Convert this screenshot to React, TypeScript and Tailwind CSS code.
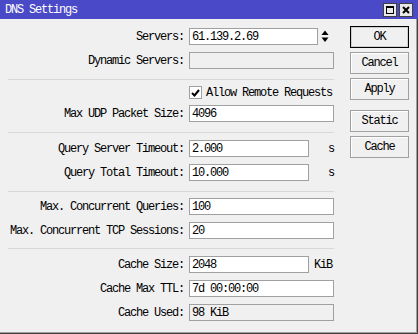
import React from "react";

const mono = "font-['Liberation_Mono','DejaVu_Sans_Mono',monospace] text-[12px] tracking-[-1.2px] leading-none";

function Field({
  label,
  children,
  className = "",
}: {
  label: string;
  children: React.ReactNode;
  className?: string;
}) {
  return (
    <div className={`flex items-center h-[17px] ${className}`}>
      <span className="w-[184px] shrink-0 text-right text-black">{label}</span>
      <div className="ml-[5px] flex items-center">{children}</div>
    </div>
  );
}

function Input({
  value = "",
  width,
  disabled = false,
}: {
  value?: string;
  width: string;
  disabled?: boolean;
}) {
  return (
    <div
      className={`h-[17px] border border-[#a0a0a0] pl-[2px] flex items-center text-black ${width} ${
        disabled ? "bg-[#f0f0f0]" : "bg-white"
      }`}
    >
      {value}
    </div>
  );
}

function Separator({ className = "" }: { className?: string }) {
  return <div className={`ml-[8px] w-[326px] h-px bg-[#d8d8d8] ${className}`} />;
}

function Btn({ label, primary = false, className = "" }: { label: string; primary?: boolean; className?: string }) {
  return (
    <div
      className={`h-[22px] w-[59px] flex items-center justify-center text-black bg-[#f0f0f0] ${
        primary ? "border border-black shadow-[inset_0_0_0_1px_#d0d0d0]" : "border border-[#a0a0a0] shadow-[inset_1px_1px_0_#ffffff]"
      } ${className}`}
    >
      {label}
    </div>
  );
}

export default function App() {
  return (
    <div className={`w-[418px] h-[334px] flex flex-col bg-[#f0f0f0] ${mono}`}>
      {/* title bar */}
      <div className="h-[19px] shrink-0 bg-[#4a4ac8] flex items-center pl-[5px] pr-[5px]">
        <span className="text-white flex-1 pt-px">DNS Settings</span>
        <div className="flex gap-[2px]">
          <div className="size-[14px] bg-[#e8e8e8] border border-[#404040] flex items-center justify-center">
            <div className="size-[8px] border border-black border-t-2" />
          </div>
          <div className="size-[14px] bg-[#e8e8e8] border border-[#404040] flex items-center justify-center">
            <svg width="8" height="8" viewBox="0 0 8 8">
              <path d="M1 1L7 7M7 1L1 7" stroke="#000" strokeWidth="2" />
            </svg>
          </div>
        </div>
      </div>

      {/* body */}
      <div className="flex-1 flex border-r border-b border-[#404040]">
        <div className="flex-1 flex border-r border-b border-[#a0a0a0]">
          <div className="w-[342px] flex flex-col pt-[9px]">
            <Field label="Servers:">
              <Input value="61.139.2.69" width="w-[129px]" />
              <svg className="ml-[3px]" width="8" height="13" viewBox="0 0 8 13">
                <path d="M0.5 5L4 0.5L7.5 5Z" fill="#000" />
                <path d="M0.5 7.5L4 12L7.5 7.5Z" fill="#000" />
              </svg>
            </Field>
            <Field label="Dynamic Servers:" className="mt-[7px]">
              <Input width="w-[145px]" disabled />
            </Field>
            <Separator className="mt-[10px]" />
            <div className="mt-[6px] h-[13px] flex items-center pl-[189px]">
              <div className="size-[13px] bg-white border border-[#a0a0a0] flex items-center justify-center">
                <svg width="9" height="8" viewBox="0 0 9 8">
                  <path d="M1 4L3.5 6.5L8 1" stroke="#000" strokeWidth="2" fill="none" />
                </svg>
              </div>
              <span className="ml-[4px] text-black">Allow Remote Requests</span>
            </div>
            <Field label="Max UDP Packet Size:" className="mt-[6px]">
              <Input value="4096" width="w-[145px]" />
            </Field>
            <Separator className="mt-[10px]" />
            <Field label="Query Server Timeout:" className="mt-[7px]">
              <Input value="2.000" width="w-[120px]" />
              <span className="ml-[19px]">s</span>
            </Field>
            <Field label="Query Total Timeout:" className="mt-[7px]">
              <Input value="10.000" width="w-[120px]" />
              <span className="ml-[19px]">s</span>
            </Field>
            <Separator className="mt-[10px]" />
            <Field label="Max. Concurrent Queries:" className="mt-[6px]">
              <Input value="100" width="w-[145px]" />
            </Field>
            <Field label="Max. Concurrent TCP Sessions:" className="mt-[7px]">
              <Input value="20" width="w-[145px]" />
            </Field>
            <Separator className="mt-[9px]" />
            <Field label="Cache Size:" className="mt-[7px]">
              <Input value="2048" width="w-[120px]" />
              <span className="ml-[5px]">KiB</span>
            </Field>
            <Field label="Cache Max TTL:" className="mt-[7px]">
              <Input value="7d 00:00:00" width="w-[145px]" />
            </Field>
            <Field label="Cache Used:" className="mt-[7px]">
              <Input value="98 KiB" width="w-[145px]" disabled />
            </Field>
          </div>

          <div className="ml-[8px] flex flex-col pt-[7px] gap-[4px]">
            <Btn label="OK" primary />
            <Btn label="Cancel" />
            <Btn label="Apply" />
            <Btn label="Static" className="mt-[6px]" />
            <Btn label="Cache" />
          </div>
        </div>
      </div>
    </div>
  );
}
